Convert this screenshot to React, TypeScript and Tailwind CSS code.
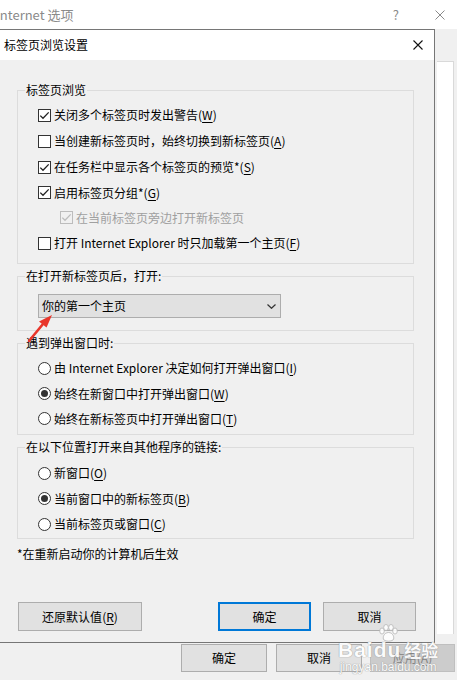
import React from "react";

const font = { fontFamily: '"Noto Sans CJK SC", "Noto Sans", sans-serif' };

function CheckBox({ checked, disabled }: { checked?: boolean; disabled?: boolean }) {
  return (
    <span
      className={`flex h-[13px] w-[13px] shrink-0 items-center justify-center border ${
        disabled ? "border-[#bcbcbc] bg-[#f0f0f0]" : "border-[#333333] bg-white"
      }`}
    >
      {checked && (
        <svg width="11" height="11" viewBox="0 0 11 11">
          <path
            d="M1.3 5.6 L4 8.3 L9.7 2.4"
            fill="none"
            stroke={disabled ? "#bcbcbc" : "#222222"}
            strokeWidth="1.3"
          />
        </svg>
      )}
    </span>
  );
}

function Radio({ checked }: { checked?: boolean }) {
  return (
    <span className="flex h-[13px] w-[13px] shrink-0 items-center justify-center rounded-full border border-[#333333] bg-white">
      {checked && <span className="h-[7px] w-[7px] rounded-full bg-[#333333]" />}
    </span>
  );
}

function Key({ k }: { k: string }) {
  return (
    <>
      (<span className="underline underline-offset-2">{k}</span>)
    </>
  );
}

function Group({ title, className, children }: { title: string; className: string; children: React.ReactNode }) {
  return (
    <fieldset className={`ml-[17px] w-[397px] border border-[#dcdcdc] ${className}`}>
      <legend className="ml-[7px] px-[1px] leading-[16px]">{title}</legend>
      {children}
    </fieldset>
  );
}

function Row({ h, indent = 20, children }: { h: string; indent?: number; children: React.ReactNode }) {
  return (
    <div className={`flex items-center ${h} ${indent === 20 ? "pl-[20px]" : "pl-[42px]"}`}>{children}</div>
  );
}

function WinButton({ className, children }: { className: string; children: React.ReactNode }) {
  return (
    <div className={`flex items-center justify-center border border-[#adadad] bg-[#e1e1e1] ${className}`}>
      {children}
    </div>
  );
}

export default function App() {
  return (
    <div className="relative h-[680px] w-[457px] overflow-hidden bg-[#f0f0f0] text-[12px] text-black" style={font}>
      {/* outer window title */}
      <div className="flex h-[29px] items-center bg-white text-[#8a8a8a]">
        <span className="-ml-[4px] text-[13px]">Internet 选项</span>
        <span className="ml-auto mr-[36px] text-[13px]">?</span>
        <svg className="mr-[12px]" width="10" height="10" viewBox="0 0 10 10">
          <path d="M0.5 0.5 L9.5 9.5 M9.5 0.5 L0.5 9.5" stroke="#8a8a8a" strokeWidth="1" />
        </svg>
      </div>

      <div className="flex">
        {/* inner dialog */}
        <div className="flex h-[614px] w-[435px] flex-col border-b border-r border-t border-[#767676]">
          <div className="flex h-[30px] items-center bg-white pl-[4px] pr-[11px]">
            <span className="text-[12px]">标签页浏览设置</span>
            <svg className="ml-auto" width="10" height="10" viewBox="0 0 10 10">
              <path d="M0.5 0.5 L9.5 9.5 M9.5 0.5 L0.5 9.5" stroke="#111" strokeWidth="1.1" />
            </svg>
          </div>

          <div className="relative flex-1 bg-[#f0f0f0] pt-[22px]">
            <Group title="标签页浏览" className="pb-[7px] pt-[4px]">
              <Row h="h-[26px]">
                <CheckBox checked />
                <span className="ml-[3px]">关闭多个标签页时发出警告<Key k="W" /></span>
              </Row>
              <Row h="h-[26px]">
                <CheckBox />
                <span className="ml-[3px]">当创建新标签页时，始终切换到新标签页<Key k="A" /></span>
              </Row>
              <Row h="h-[26px]">
                <CheckBox checked />
                <span className="ml-[3px]">在任务栏中显示各个标签页的预览*<Key k="S" /></span>
              </Row>
              <Row h="h-[25px]">
                <CheckBox checked />
                <span className="ml-[3px]">启用标签页分组*<Key k="G" /></span>
              </Row>
              <Row h="h-[25px]" indent={42}>
                <CheckBox checked disabled />
                <span className="ml-[3px] text-[#a0a0a0]">在当前标签页旁边打开新标签页</span>
              </Row>
              <Row h="h-[26px]">
                <CheckBox />
                <span className="ml-[3px]">打开 Internet Explorer 时只加载第一个主页<Key k="F" /></span>
              </Row>
            </Group>

            <Group title="在打开新标签页后，打开:" className="mt-[4px] pb-[12px] pt-[10px]">
              <div className="ml-[20px] flex h-[24px] w-[243px] items-center border border-[#adadad] bg-[#e1e1e1] pl-[3px] pr-[4px]">
                <span>你的第一个主页</span>
                <svg className="ml-auto" width="9" height="5" viewBox="0 0 9 5">
                  <path d="M0.5 0.5 L4.5 4.3 L8.5 0.5" fill="none" stroke="#333" strokeWidth="1.2" />
                </svg>
              </div>
            </Group>

            <Group title="遇到弹出窗口时:" className="mt-[4px] pb-[3px] pt-[4px]">
              <Row h="h-[26px]">
                <Radio />
                <span className="ml-[3px]">由 Internet Explorer 决定如何打开弹出窗口<Key k="I" /></span>
              </Row>
              <Row h="h-[25px]">
                <Radio checked />
                <span className="ml-[3px]">始终在新窗口中打开弹出窗口<Key k="W" /></span>
              </Row>
              <Row h="h-[25px]">
                <Radio />
                <span className="ml-[3px]">始终在新标签页中打开弹出窗口<Key k="T" /></span>
              </Row>
            </Group>

            <Group title="在以下位置打开来自其他程序的链接:" className="mt-[4px] pb-[1px] pt-[5px]">
              <Row h="h-[26px]">
                <Radio />
                <span className="ml-[3px]">新窗口<Key k="O" /></span>
              </Row>
              <Row h="h-[25px]">
                <Radio checked />
                <span className="ml-[3px]">当前窗口中的新标签页<Key k="B" /></span>
              </Row>
              <Row h="h-[26px]">
                <Radio />
                <span className="ml-[3px]">当前标签页或窗口<Key k="C" /></span>
              </Row>
            </Group>

            <div className="ml-[17px] mt-[7px] leading-[16px]">*在重新启动你的计算机后生效</div>

            <div className="ml-[18px] mt-[40px] flex h-[29px]">
              <WinButton className="w-[124px]">还原默认值<Key k="R" /></WinButton>
              <div className="ml-[76px] flex w-[93px] items-center justify-center border-2 border-[#0078d7] bg-[#e1e1e1]">
                确定
              </div>
              <WinButton className="ml-[12px] w-[93px]">取消</WinButton>
            </div>

            {/* red annotation arrow */}
            <svg className="absolute left-[24px] top-[252px]" width="34" height="34" viewBox="0 0 34 34">
              <path d="M5 29 L19 12" stroke="#e8352a" strokeWidth="2.6" strokeLinecap="round" />
              <path d="M28 3 L15 9.5 L22.5 15.5 Z" fill="#e8352a" />
            </svg>
          </div>
        </div>

        {/* part of the outer window to the right */}
        <div className="w-[22px]">
          <div className="ml-[2px] mt-[32px] h-[573px] w-[17px] border-r border-t border-[#d9d9d9] bg-white" />
        </div>
      </div>

      {/* outer window buttons */}
      <div className="ml-[181px] mt-[1px] flex h-[28px]">
        <WinButton className="w-[86px]">确定</WinButton>
        <WinButton className="ml-[9px] w-[86px]">取消</WinButton>
        <div className="ml-[8px] flex w-[85px] items-center justify-center border border-[#bfbfbf] bg-[#cccccc] text-[#838383]">
          应用<Key k="A" />
        </div>
      </div>

      {/* watermark */}
      <div className="pointer-events-none absolute left-[338px] top-[624px] flex flex-col items-center text-white opacity-90 [text-shadow:0_0_1px_#9a9a9a,0_0_1px_#9a9a9a]">
        <svg width="22" height="18" viewBox="0 0 22 18">
          <g fill="white" stroke="#b0b0b0" strokeWidth="0.8">
            <ellipse cx="5" cy="7" rx="2.3" ry="3" />
            <ellipse cx="9" cy="3.5" rx="2.3" ry="3" />
            <ellipse cx="14" cy="3.5" rx="2.3" ry="3" />
            <ellipse cx="18" cy="7" rx="2.3" ry="3" />
            <path d="M11.5 8.5 C7 8.5 5 14 7 16 C9 17.5 14 17.5 16 16 C18 14 16 8.5 11.5 8.5 Z" />
          </g>
        </svg>
        <div className="-mt-[2px] flex items-end leading-[20px]">
          <span className="text-[21px] font-bold tracking-[1px]" style={{ fontFamily: '"Liberation Sans", sans-serif' }}>
            Baidu
          </span>
          <span className="ml-[3px] text-[17px] font-bold">经验</span>
        </div>
        <span className="text-[12px] leading-[14px]" style={{ fontFamily: '"Liberation Sans", sans-serif' }}>
          jingyan.baidu.com
        </span>
      </div>
    </div>
  );
}
